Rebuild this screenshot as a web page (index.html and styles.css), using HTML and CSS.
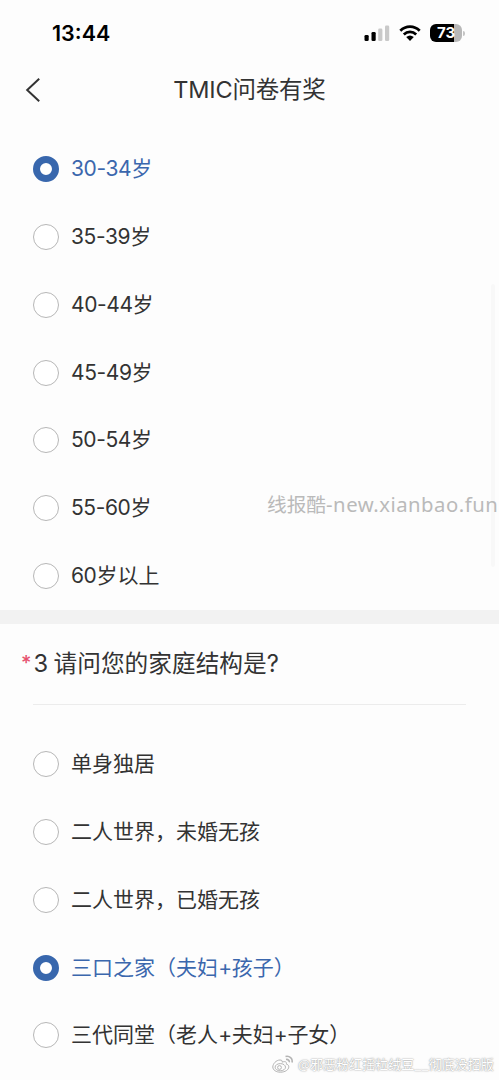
FILE: index.html
```html
<!DOCTYPE html>
<html lang="zh-CN">
<head>
<meta charset="utf-8">
<title>TMIC问卷有奖</title>
<link rel="stylesheet" href="styles.css">
</head>
<body>
<main class="screen">
  <header class="status">
    <span class="time">13:44</span>
    <div class="indicators">
      <svg class="signal" width="26" height="16" viewBox="0 0 26 16">
        <rect x="0.5" y="10" width="4.2" height="6" rx="1.3" fill="#000"/>
        <rect x="7.5" y="7" width="4.2" height="9" rx="1.3" fill="#000"/>
        <rect x="14.2" y="3.6" width="4.2" height="12.4" rx="1.3" fill="#c9c9c9"/>
        <rect x="21" y="0.4" width="4.2" height="15.6" rx="1.3" fill="#c9c9c9"/>
      </svg>
      <svg class="wifi" width="22" height="16" viewBox="0 0 22 16">
        <g fill="none" stroke="#000" stroke-width="2.7">
          <path d="M1.3 5.7C6.8.2 15.2.2 20.7 5.7"/>
          <path d="M4.8 9.5C8.4 6 13.6 6 17.2 9.5"/>
        </g>
        <path d="M7.2 12.1Q11 8.9 14.8 12.1L11 16Z"/>
      </svg>
      <div class="battery"><span class="level">73</span><i class="cap"></i></div>
    </div>
  </header>
  <nav class="nav">
    <svg class="back" width="16" height="26" viewBox="0 0 16 26"><path d="M14.2 1.8L2.2 13L14.2 24.2" fill="none" stroke="#333" stroke-width="2"/></svg>
    <h1 class="title">TMIC问卷有奖</h1>
  </nav>
  <section class="options ages">
    <label class="option selected"><i class="radio"></i><span class="label"><b class="range">30-34</b>岁</span></label>
    <label class="option"><i class="radio"></i><span class="label"><b class="range">35-39</b>岁</span></label>
    <label class="option"><i class="radio"></i><span class="label"><b class="range">40-44</b>岁</span></label>
    <label class="option"><i class="radio"></i><span class="label"><b class="range">45-49</b>岁</span></label>
    <label class="option"><i class="radio"></i><span class="label"><b class="range">50-54</b>岁</span></label>
    <label class="option"><i class="radio"></i><span class="label"><b class="range">55-60</b>岁</span></label>
    <label class="option"><i class="radio"></i><span class="label"><b class="range">60</b>岁以上</span></label>
  </section>
  <div class="divider"></div>
  <h2 class="question"><span class="star">*</span><span class="number">3</span><span>请问您的家庭结构是?</span></h2>
  <section class="options family">
    <label class="option"><i class="radio"></i><span class="label">单身独居</span></label>
    <label class="option"><i class="radio"></i><span class="label">二人世界，未婚无孩</span></label>
    <label class="option"><i class="radio"></i><span class="label">二人世界，已婚无孩</span></label>
    <label class="option selected"><i class="radio"></i><span class="label">三口之家（夫妇<b class="plus">+</b>孩子）</span></label>
    <label class="option"><i class="radio"></i><span class="label">三代同堂（老人<b class="plus">+</b>夫妇<b class="plus">+</b>子女）</span></label>
  </section>
  <div class="scrollbar"></div>
  <div class="watermark">线报酷<span class="domain">-new.xianbao.fun</span></div>
  <div class="credit">
    <svg width="22" height="19" viewBox="0 0 22 19" fill="none" stroke="#b4b4b4" stroke-width="1">
      <path d="M8 5C4 5 .8 9 .8 12c0 3 3.4 5.2 7.5 5.2 5 0 8.5-2.5 8.5-5.4 0-1.7-1.3-2.4-2.5-2.7.7-2-.8-3.2-4.2-2C10.6 5.8 9.7 5 8 5Z"/>
      <ellipse cx="8.3" cy="12.2" rx="5.2" ry="3.6"/>
      <circle cx="7.5" cy="12.5" r="1.9"/>
      <path d="M13.5 1.5C17.5.5 21 3.5 20 7.5M14 4.5C16 4 17.7 5.5 17.2 7.3" stroke-width="1.6"/>
    </svg>
    <span class="author">@邪恶粉红摇粒绒豆__彻底没招版</span>
  </div>
</main>
</body>
</html>
```
FILE: styles.css
```css
* { box-sizing: border-box; }
body { margin: 0; background: #fdfdfd; }
.screen {
  position: relative;
  width: 499px;
  height: 1080px;
  overflow: hidden;
  color: #333;
  background: #fdfdfd;
  font-family: Inter, "Noto Sans CJK SC", sans-serif;
}
.status {
  display: flex;
  justify-content: space-between;
  align-items: center;
  height: 66px;
  padding: 0 34px 0 52px;
}
.time { color: #000; font-size: 21.5px; font-weight: 600; }
.indicators { display: flex; align-items: center; }
.wifi { margin-left: 9px; }
.battery { display: flex; align-items: center; margin-left: 9px; }
.level {
  width: 32px;
  height: 18px;
  border-radius: 6px;
  background: linear-gradient(90deg, #000 75%, #b8b8b8 75%);
  color: #fff;
  font-size: 15px;
  font-weight: 700;
  line-height: 18px;
  text-align: center;
}
.cap { width: 2px; height: 5px; margin-left: 1px; border-radius: 0 2px 2px 0; background: #c4c4c4; }
.nav {
  display: grid;
  grid-template-columns: 25px 1fr 25px;
  align-items: center;
  height: 48px;
}
.back { margin-left: 25px; }
.title {
  margin: 0;
  font-size: 23.5px;
  font-weight: 400;
  letter-spacing: -0.2px;
  line-height: 32px;
  text-align: center;
}
.options { display: flex; flex-direction: column; }
.ages { padding-top: 21px; height: 496px; }
.option {
  display: flex;
  flex: none;
  align-items: center;
  height: 67.86px;
  padding-left: 33px;
  gap: 12px;
}
.radio {
  width: 26px;
  height: 26px;
  border: 1px solid #b7b7b7;
  border-radius: 50%;
  background: #fff;
}
.label { font-size: 21px; line-height: 30px; white-space: nowrap; }
.label b { display: inline-block; font-weight: 400; }
.range { letter-spacing: -0.4px; }
.plus { width: 13.7px; text-align: center; letter-spacing: -0.5px; }
.selected { color: #3b67ad; }
.selected .radio { border: 7px solid #3867ad; }
.divider { height: 14px; background: #f2f2f2; }
.question {
  display: flex;
  align-items: center;
  height: 81px;
  margin: 0 33px;
  border-bottom: 1px solid #ececec;
  font-size: 23.7px;
  font-weight: 400;
  line-height: 32px;
  white-space: nowrap;
}
.star { width: 12.5px; margin-left: -12px; padding-bottom: 3px; color: #e6506e; font-size: 20px; font-weight: 500; }
.number { width: 20px; }
.family { padding-top: 25px; }
.scrollbar {
  position: absolute;
  top: 284px;
  right: 4px;
  width: 4px;
  height: 283px;
  border-radius: 2px;
  background: #f8f8f8;
}
.watermark {
  position: absolute;
  left: 267px;
  top: 490px;
  color: #bababa;
  font-family: "Noto Sans", "Noto Sans CJK SC", sans-serif;
  font-size: 19.7px;
  line-height: 28px;
  white-space: nowrap;
}
.domain { font-size: 20.3px; letter-spacing: 0.5px; }
.credit {
  position: absolute;
  left: 272px;
  top: 1054px;
  display: flex;
  align-items: center;
  gap: 4px;
}
.author {
  color: #fff;
  font-family: "Noto Sans CJK SC", sans-serif;
  font-size: 13px;
  line-height: 20px;
  white-space: nowrap;
  text-shadow: 0 0 1px #999, 0 0 2px #aaa;
}
```
